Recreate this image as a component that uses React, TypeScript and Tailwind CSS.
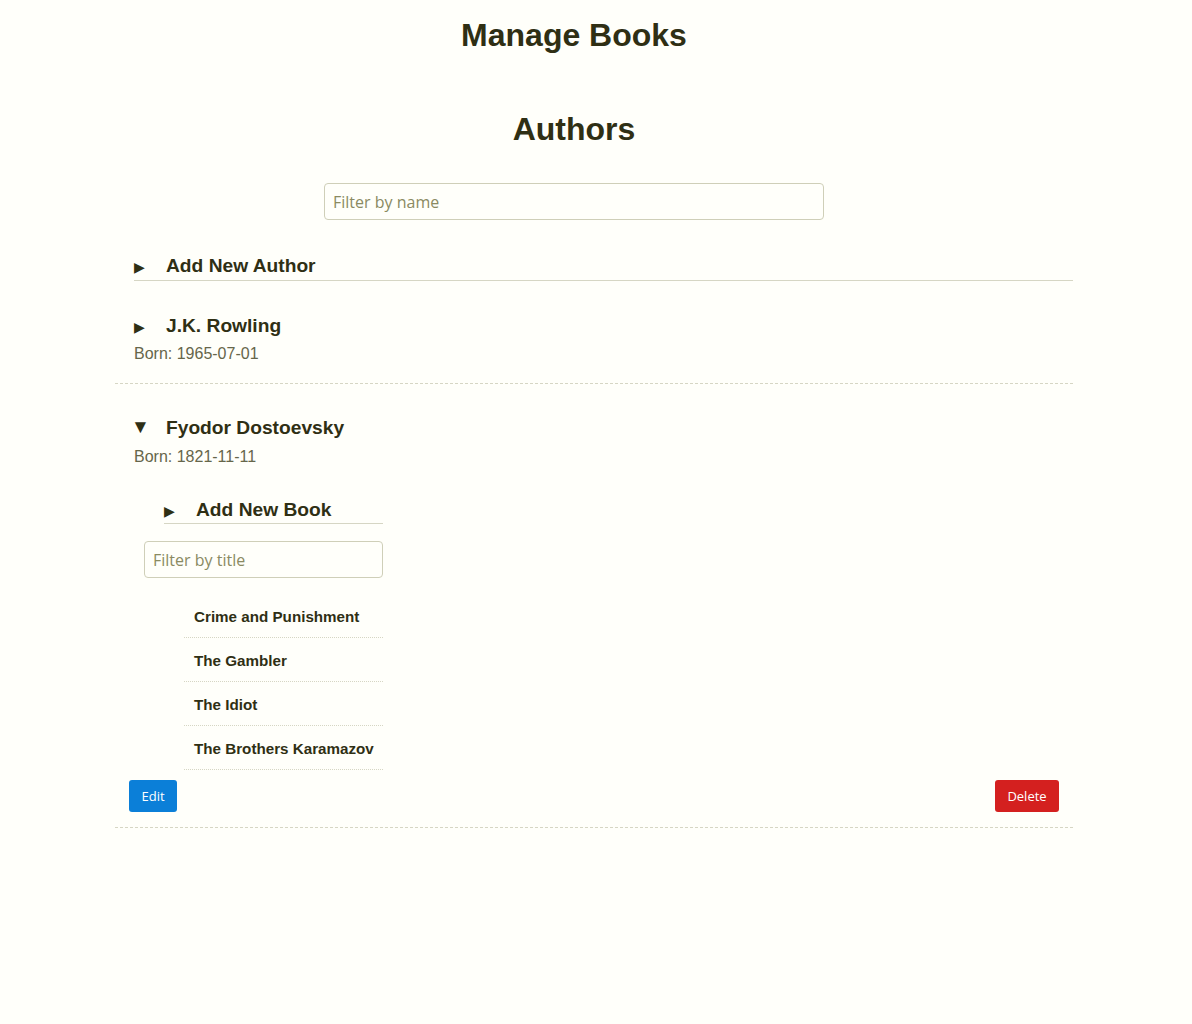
import React from "react";

const books = [
  "Crime and Punishment",
  "The Gambler",
  "The Idiot",
  "The Brothers Karamazov",
];

const Arrow: React.FC<{ open?: boolean }> = ({ open }) =>
  open ? (
    <span className="inline-block w-[35px] -ml-[3px] text-[19px] leading-none translate-y-[-1px]">
      ▼
    </span>
  ) : (
    <span className="inline-block w-[32px] text-[13.5px] leading-none translate-y-[2px]">
      ▶
    </span>
  );

const App: React.FC = () => {
  return (
    <div className="min-h-[1024px] bg-[#fffffa] text-[#2f2f14] font-['Liberation_Sans',Arial,sans-serif]">
      {/* Titles */}
      <div className="pr-[44px] text-center">
        <h1 className="pt-[17px] text-[32px] leading-[37px] font-bold">
          Manage Books
        </h1>
        <h2 className="mt-[57px] text-[32px] leading-[37px] font-bold">
          Authors
        </h2>
        <div className="mt-[35px] flex justify-center">
          <input
            type="text"
            placeholder="Filter by name"
            className="w-[500px] h-[37px] px-[8px] rounded-[4px] border border-[#cfcfb8] bg-transparent text-[16px] font-['Open_Sans',sans-serif] placeholder:text-[#8a8a62] outline-none"
          />
        </div>
      </div>

      <div className="ml-[115px] w-[958px]">
        {/* Add new author */}
        <div className="ml-[19px] mt-[35px] pb-[4px] border-b border-[#d6d6c4] flex items-center">
          <Arrow />
          <span className="text-[19.2px] leading-[21px] font-bold">
            Add New Author
          </span>
        </div>

        {/* J.K. Rowling */}
        <div className="pt-[34px] pb-[20px] border-b border-dashed border-[#d6d6c4]">
          <div className="px-[19px]">
            <div className="flex items-center">
              <Arrow />
              <span className="text-[19.2px] leading-[21px] font-bold">
                J.K. Rowling
              </span>
            </div>
            <p className="mt-[9px] text-[16px] leading-[18px] text-[#66664a]">
              Born: 1965-07-01
            </p>
          </div>
        </div>

        {/* Fyodor Dostoevsky */}
        <div className="pt-[33px] pb-[15px] border-b border-dashed border-[#d6d6c4]">
          <div className="px-[19px]">
            <div className="flex items-center">
              <Arrow open />
              <span className="text-[19.2px] leading-[21px] font-bold">
                Fyodor Dostoevsky
              </span>
            </div>
            <p className="mt-[10px] text-[16px] leading-[18px] text-[#66664a]">
              Born: 1821-11-11
            </p>
          </div>

          <div className="ml-[29px] w-[239px]">
            <div className="ml-[20px] mt-[33px] pb-[3px] border-b border-[#d6d6c4] flex items-center">
              <Arrow />
              <span className="text-[19.2px] leading-[21px] font-bold">
                Add New Book
              </span>
            </div>
            <input
              type="text"
              placeholder="Filter by title"
              className="mt-[17px] w-[239px] h-[37px] px-[8px] rounded-[4px] border border-[#cfcfb8] bg-transparent text-[16px] font-['Open_Sans',sans-serif] placeholder:text-[#8a8a62] outline-none"
            />
            <ul className="ml-[40px] mt-[16px]">
              {books.map((b) => (
                <li
                  key={b}
                  className="h-[44px] pl-[10px] pt-[4px] flex items-center border-b border-dotted border-[#d6d6c4] text-[15.2px] font-bold whitespace-nowrap"
                >
                  {b}
                </li>
              ))}
            </ul>
          </div>

          <div className="mt-[10px] px-[14px] flex justify-between">
            <button className="h-[32px] w-[48px] pt-[1px] rounded-[3px] bg-[#0b7fd8] text-white text-[13px] font-['Open_Sans',sans-serif]">
              Edit
            </button>
            <button className="h-[32px] w-[64px] pt-[1px] rounded-[3px] bg-[#d4201f] text-white text-[13px] font-['Open_Sans',sans-serif]">
              Delete
            </button>
          </div>
        </div>
      </div>
    </div>
  );
};

export default App;
